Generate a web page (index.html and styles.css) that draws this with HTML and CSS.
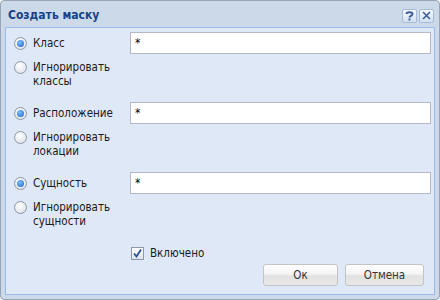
FILE: index.html
```html
<!DOCTYPE html>
<html lang="ru">
<head>
    <meta charset="UTF-8">
    <title>Создать маску</title>
    <link rel="stylesheet" href="styles.css">
</head>
<body>
    <div class="window">
        <div class="header">
            <span class="title">Создать маску</span>
            <div class="tools">
                <span class="tool">
                    <svg width="9" height="10" viewBox="0 0 9 10"><path d="M1.5 3 C1.5 0.5 7.5 0.5 7.5 3 C7.5 5 4.5 4.8 4.5 6.5" fill="none" stroke="#3d5f96" stroke-width="2"/><rect x="3.5" y="7.5" width="2" height="2" fill="#3d5f96"/></svg>
                </span>
                <span class="tool">
                    <svg width="9" height="9" viewBox="0 0 9 9"><path d="M1 1 L8 8 M8 1 L1 8" stroke="#3d5f96" stroke-width="1.6"/></svg>
                </span>
            </div>
        </div>
        <div class="body">
            <div class="group">
                <div class="options">
                    <label class="option first"><span class="radio checked"></span>Класс</label>
                    <label class="option"><span class="radio"></span><span>Игнорировать<br>классы</span></label>
                </div>
                <input class="field" type="text" value="*">
            </div>
            <div class="group">
                <div class="options">
                    <label class="option first"><span class="radio checked"></span>Расположение</label>
                    <label class="option"><span class="radio"></span><span>Игнорировать<br>локации</span></label>
                </div>
                <input class="field" type="text" value="*">
            </div>
            <div class="group">
                <div class="options">
                    <label class="option first"><span class="radio checked"></span>Сущность</label>
                    <label class="option"><span class="radio"></span><span>Игнорировать<br>сущности</span></label>
                </div>
                <input class="field" type="text" value="*">
            </div>
            <label class="check">
                <span class="box">
                    <svg width="11" height="11" viewBox="0 0 11 11"><path d="M2 5.5 L4.5 8.5 L9 1.5" fill="none" stroke="#2c4f98" stroke-width="1.8"/></svg>
                </span>
                Включено
            </label>
            <div class="buttons">
                <button class="btn ok">Ок</button>
                <button class="btn cancel">Отмена</button>
            </div>
        </div>
    </div>
</body>
</html>
```

FILE: styles.css
```css
html, body {
    margin: 0;
    padding: 0;
}

body {
    font-family: "DejaVu Sans Condensed", "DejaVu Sans", Tahoma, sans-serif;
    font-size: 11.5px;
    color: #000;
    width: 440px;
    height: 300px;
}

.window {
    box-sizing: border-box;
    width: 440px;
    height: 300px;
    border: 1px solid #99a5b4;
    border-radius: 4px;
    background: #cbd9e8;
    display: flex;
    flex-direction: column;
}

.header {
    height: 26px;
    display: flex;
    align-items: center;
    justify-content: space-between;
    padding: 0 5px 0 7px;
    flex-shrink: 0;
}

.title {
    font-weight: bold;
    color: #15428b;
    font-size: 12px;
    padding-top: 2px;
}

.tools {
    display: flex;
    gap: 2px;
    padding-top: 3px;
}

.tool {
    box-sizing: border-box;
    width: 15px;
    height: 14px;
    border: 1px solid #a6bcd6;
    border-radius: 2px;
    background: linear-gradient(#f4f8fd, #d4e1f0);
    display: flex;
    align-items: center;
    justify-content: center;
}

.body {
    flex: 1;
    margin: 0 4px 4px 4px;
    border: 1px solid #99bbe8;
    background: #dfe8f6;
    padding: 4px 3px 0 4px;
    display: flex;
    flex-direction: column;
}

.group {
    display: flex;
    height: 70px;
}

.options {
    width: 120px;
    display: flex;
    flex-direction: column;
}

.option {
    display: flex;
    align-items: flex-start;
    line-height: 14px;
    margin-top: 6px;
    color: #1a1a1a;
}

.option.first {
    height: 22px;
    align-items: center;
    margin-top: 0;
}

.radio {
    box-sizing: border-box;
    width: 13px;
    height: 13px;
    border-radius: 50%;
    border: 1px solid #8d99a6;
    background: radial-gradient(circle at 40% 35%, #ffffff, #d6dbe2);
    margin: 0 6px 0 4px;
    flex-shrink: 0;
    position: relative;
}

.option:not(.first) .radio {
    margin-top: 1px;
}

.radio.checked::after {
    content: "";
    position: absolute;
    left: 2px;
    top: 2px;
    width: 7px;
    height: 7px;
    border-radius: 50%;
    background: radial-gradient(circle at 40% 35%, #7cc0ff, #1d5fc4);
}

.field {
    box-sizing: border-box;
    width: 301px;
    height: 22px;
    border: 1px solid #b5b8c8;
    background: #fff;
    font-family: inherit;
    font-size: 12px;
    padding: 0 4px;
    outline: none;
    align-self: flex-start;
}

.check {
    display: flex;
    align-items: center;
    margin: 4px 0 0 121px;
    height: 14px;
    color: #1a1a1a;
}

.box {
    box-sizing: border-box;
    width: 13px;
    height: 13px;
    border: 1px solid #8d99a6;
    background: linear-gradient(#ffffff, #dde3ea);
    display: flex;
    align-items: center;
    justify-content: center;
    margin-right: 6px;
}

.buttons {
    display: flex;
    justify-content: flex-end;
    gap: 7px;
    margin-top: 4px;
    padding-right: 7px;
}

.btn {
    box-sizing: border-box;
    height: 22px;
    border: 1px solid #c4c4c4;
    border-radius: 3px;
    background: linear-gradient(#ffffff 0%, #f3f3f3 45%, #e2e2e2 55%, #e8e8e8 100%);
    font-family: inherit;
    font-size: 11.5px;
    color: #333;
    padding: 0;
}

.ok {
    width: 75px;
}

.cancel {
    width: 79px;
}
```
